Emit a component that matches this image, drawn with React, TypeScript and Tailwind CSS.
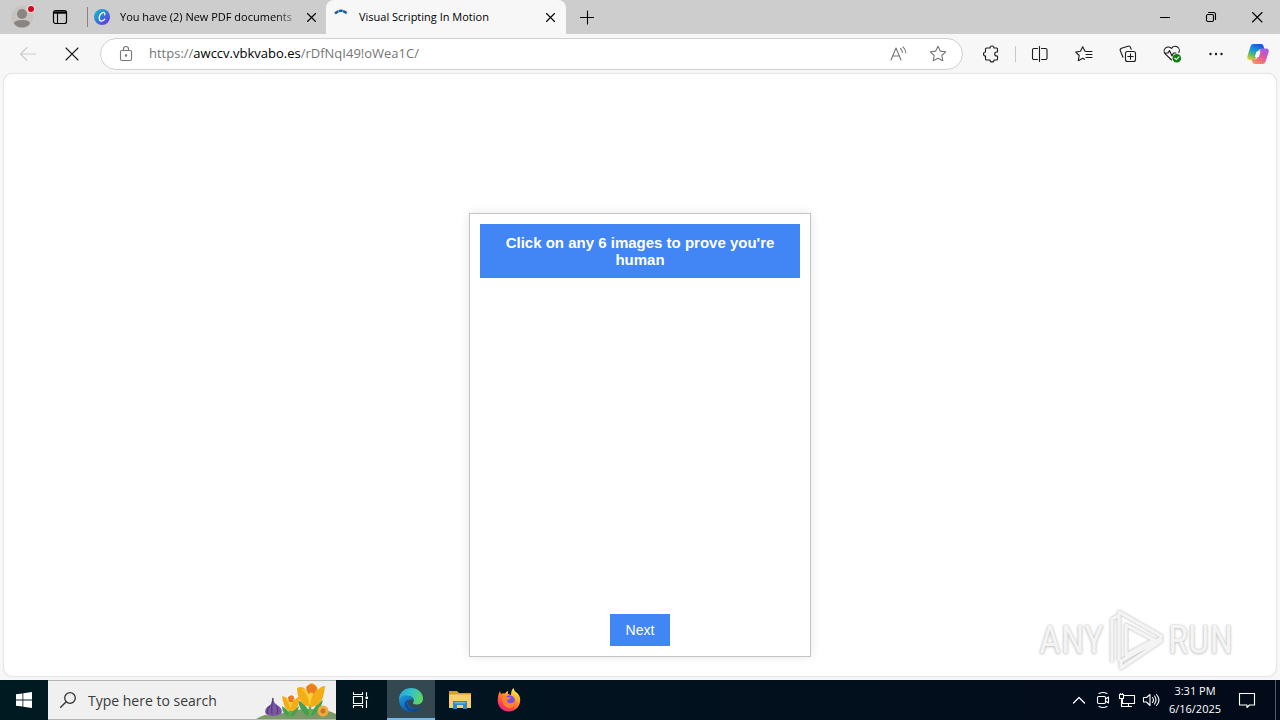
import React from "react";

type IconProps = { children: React.ReactNode; className?: string; box?: number };

function Icon({ children, className = "size-5", box = 20 }: IconProps) {
  return (
    <svg
      viewBox={`0 0 ${box} ${box}`}
      className={`${className} shrink-0`}
      fill="none"
      stroke="currentColor"
      strokeWidth="1.1"
      strokeLinejoin="round"
      strokeLinecap="round"
      aria-hidden="true"
    >
      {children}
    </svg>
  );
}

const STAR = "M10 2.2l2.3 4.9 5.4.7-3.9 3.7 1 5.3-4.8-2.6-4.8 2.6 1-5.3-3.9-3.7 5.4-.7z";

function Cross() {
  return (
    <Icon className="size-4" box={16}>
      <path d="M4.500 4.500l8 8M12.500 4.500l-8 8" />
    </Icon>
  );
}

function TitleBar() {
  return (
    <header className="flex h-[34px] shrink-0 items-stretch bg-[#cdcdcd] text-black">
      <button aria-label="Profile" className="flex w-11 items-center justify-center">
        <svg viewBox="0 0 28 28" className="size-7" aria-hidden="true">
          <circle cx="14" cy="14" r="11" fill="#c6c3c1" />
          <circle cx="14" cy="11" r="5" fill="#8a8583" />
          <path d="M6 20.500q0-3.500 8-3.500t8 3.500q-2.500 4-8 4t-8-4z" fill="#8a8583" />
          <circle cx="23" cy="6" r="4.200" fill="#eed8d8" />
          <circle cx="23" cy="6" r="3" fill="#d5091e" />
        </svg>
      </button>
      <button aria-label="Tab actions" className="flex w-8 items-center justify-center">
        <Icon className="size-4" box={16}>
          <rect x="1.500" y="1.500" width="13" height="13" rx="2" strokeWidth="1.200" />
          <path d="M2 3.500h12" strokeWidth="2.400" strokeLinecap="butt" />
          <path d="M5.500 4v10.500" />
        </Icon>
      </button>
      <nav aria-label="Tabs" className="ml-[11px] flex items-stretch text-[11px]">
        <div className="flex w-[239px] items-center pr-0.5">
          <span className="h-5 w-px bg-[#94807a]" />
          <svg viewBox="0 0 16 16" className="ml-1.5 size-4 shrink-0" aria-hidden="true">
            <defs>
              <linearGradient id="canva" x1="0" y1="0" x2="1" y2="1">
                <stop offset="0.100" stopColor="#12b8ce" />
                <stop offset="0.500" stopColor="#3277dc" />
                <stop offset="1" stopColor="#7c25dd" />
              </linearGradient>
            </defs>
            <circle cx="8" cy="8" r="8" fill="url(#canva)" />
            <path d="M10.700 5.800c.8-1.600-.5-2.700-2-2.200C6.400 4.300 5 7.400 5.200 9.600c.2 3 3.500 3.300 5.600.6" fill="none" stroke="#fff" strokeWidth="1.300" strokeLinecap="round" />
          </svg>
          <a href="#documents" className="ml-2.5 min-w-0 flex-1 bg-linear-to-r from-black from-85% to-[#b5b5b5] bg-clip-text whitespace-nowrap text-transparent">
            You have (2) New PDF documents
          </a>
          <button aria-label="Close tab" className="flex w-[26px] justify-center"><Cross /></button>
        </div>
        <div className="flex w-60 items-center rounded-t-lg bg-[#f7f7f7] pl-[7px] pr-[3px]">
          <Icon className="size-4" box={16}>
            <path d="M2 4.500Q8-1 14 4.500" stroke="#155d9b" strokeWidth="2.400" strokeLinecap="butt" strokeDasharray="4 .4" />
          </Icon>
          <a href="#visual" aria-current="page" className="ml-2.5 min-w-0 flex-1 whitespace-nowrap">Visual Scripting In Motion</a>
          <button aria-label="Close tab" className="flex w-[26px] justify-center"><Cross /></button>
        </div>
      </nav>
      <button aria-label="New tab" className="flex w-[42px] items-center justify-center">
        <Icon className="size-4" box={16}><path d="M1.500 8.500h13M8.500 2v13" /></Icon>
      </button>
      <div className="ml-auto flex">
        <button aria-label="Minimize" className="flex w-[46px] items-center justify-center">
          <Icon className="size-4" box={16}><path d="M3.500 8.500h9" /></Icon>
        </button>
        <button aria-label="Restore" className="flex w-[46px] items-center justify-center">
          <Icon className="size-4" box={16}>
            <rect x="3.500" y="5.500" width="7" height="7" rx="1.500" />
            <path d="M5.500 3.500h5q2 0 2 2v5" />
          </Icon>
        </button>
        <button aria-label="Close" className="flex w-[46px] items-center justify-center">
          <Icon className="size-4" box={16}><path d="M3.500 3.500l9.500 9.500M13 3.500L3.500 13" /></Icon>
        </button>
      </div>
    </header>
  );
}

function ToolButton({ label, children }: { label: string; children: React.ReactNode }) {
  return (
    <button aria-label={label} className="flex h-8 w-11 shrink-0 items-center justify-center">{children}</button>
  );
}

function Toolbar() {
  return (
    <div className="flex h-10 shrink-0 items-center pl-1.5 pr-0.5 text-[#1b1b1b]">
      <button aria-label="Back" className="flex h-8 w-11 items-center justify-center text-[#cccccc]">
        <Icon><path d="M17.500 10h-15M9 3.500L2.500 10 9 16.500" /></Icon>
      </button>
      <ToolButton label="Stop"><Icon><path d="M4 4l12 12M16 4L4 16" /></Icon></ToolButton>
      <div className="mx-1.5 flex h-8 min-w-0 flex-1 items-center rounded-full border border-[#d0d0d0] bg-white pl-[15px] pr-1 text-[#767676]">
        <Icon>
          <rect x="4.500" y="6.500" width="11" height="10" rx="1.500" />
          <path d="M7.500 6.500V5a2.500 2.500 0 0 1 5 0v1.500" />
          <circle cx="10" cy="11.500" r="0.700" fill="currentColor" />
        </Icon>
        <a href="#address" className="ml-[13px] flex-1 whitespace-nowrap text-[13px]">
          https://<span className="text-black">awccv.vbkvabo.es</span>/rDfNqI49!oWea1C/
        </a>
        <button aria-label="Read aloud" className="flex w-10 justify-center">
          <Icon>
            <path d="M3 16L8 4l5 12M4.800 12h6.400M12.500 4.500q1.800 1.500 1.800 4M15 2.800q2.700 2.500 2.700 6" />
          </Icon>
        </button>
        <button aria-label="Add to favorites" className="flex w-10 justify-center"><Icon><path d={STAR} /></Icon></button>
      </div>
      <ToolButton label="Extensions">
        <Icon>
          <path d="M5.500 4H9a2 2 0 0 1 4 0h2.500a1 1 0 0 1 1 1v3h-.800a2 2 0 0 0 0 4h.800v3a1 1 0 0 1-1 1H13a2 2 0 0 1-4 0H5.500a1 1 0 0 1-1-1v-3a2 2 0 0 1 0-4V5a1 1 0 0 1 1-1z" />
        </Icon>
      </ToolButton>
      <span className="mx-0.5 h-4 w-px bg-[#c9c9c9]" />
      <ToolButton label="Split screen">
        <Icon>
          <path d="M7.500 4.500H4A1.500 1.500 0 0 0 2.500 6v8A1.500 1.500 0 0 0 4 15.500h3.500M11.500 4.500h4A1.500 1.500 0 0 1 17 6v8a1.500 1.500 0 0 1-1.500 1.500h-4M9.500 2.500v15" />
        </Icon>
      </ToolButton>
      <ToolButton label="Favorites">
        <Icon>
          <path d="M12.500 7.500L11 7.300 8.700 2.700 6.500 7.300 1.700 8l3.500 3.500-.9 5.200 4.400-2.400 1.800 1M12.500 7.500H18M12 10.500h6M12 13.500h6" />
        </Icon>
      </ToolButton>
      <ToolButton label="Collections">
        <Icon>
          <rect x="7.500" y="7.500" width="10" height="10" rx="2" />
          <path d="M12.500 9.800v5.400M9.800 12.500h5.400M5 13.200L2.300 6.700a2 2 0 0 1 1.200-2.500l6.500-2a2 2 0 0 1 2.500 1.300l.7 1.800" />
        </Icon>
      </ToolButton>
      <ToolButton label="Browser essentials">
        <Icon>
          <path d="M9.500 16L3 9.700A4 4 0 0 1 9.500 4.500 4 4 0 0 1 16.800 8.500M2.500 9H6l1.500-2.500L10 12l1.500-3H14" />
          <circle cx="14.800" cy="14.200" r="4.300" fill="#107c10" stroke="none" />
          <path d="M12.800 14.200l1.500 1.500 2.600-2.800" stroke="#fff" />
        </Icon>
      </ToolButton>
      <ToolButton label="Settings and more">
        <Icon><g fill="currentColor" stroke="none"><circle cx="4.500" cy="10" r="1.200" /><circle cx="10" cy="10" r="1.200" /><circle cx="15.500" cy="10" r="1.200" /></g></Icon>
      </ToolButton>
      <button aria-label="Copilot" className="flex h-8 w-10 shrink-0 items-center justify-center">
        <svg viewBox="0 0 24 24" className="size-6" aria-hidden="true">
          <defs>
            <linearGradient id="cop1" x1="0.700" y1="0" x2="0.200" y2="1">
              <stop offset="0" stopColor="#1456d8" /><stop offset="0.450" stopColor="#169bdc" /><stop offset="0.700" stopColor="#52b96a" /><stop offset="1" stopColor="#f1cf20" />
            </linearGradient>
            <linearGradient id="cop2" x1="0.800" y1="0" x2="0.200" y2="1">
              <stop offset="0" stopColor="#a35be8" /><stop offset="0.500" stopColor="#e4589e" /><stop offset="1" stopColor="#f9964e" />
            </linearGradient>
          </defs>
          <path d="M7.500 2h7.300c2 0 2.500 1.300 3 3l.5 2h-3c-2 0-2.900 1-3.400 2.500l-2 6c-.5 1.700-1.300 2.500-3 2.500H4c-2.500 0-3.200-1.500-2.500-4L4.300 5c.6-2 1.400-3 3.200-3z" fill="url(#cop1)" />
          <path d="M16.500 22H9.200c-2 0-2.500-1.300-3-3l-.4-1.500h2.400c2 0 2.900-1 3.400-2.500l2-6c.5-1.700 1.300-2.500 3-2.500H20c2.500 0 3.200 1.500 2.500 4L19.700 19c-.6 2-1.400 3-3.200 3z" fill="url(#cop2)" />
          <path d="M10.500 9.500h4l-1.700 5.500H8.700z" fill="#fff" />
        </svg>
      </button>
    </div>
  );
}

function Watermark() {
  return (
    <div className="absolute right-[43px] bottom-1 flex items-center gap-1 font-['Liberation_Sans_Narrow','Roboto_Condensed','Liberation_Sans',sans-serif] text-[38px] leading-[64px] text-[#f4f4f4] [text-shadow:0_0_2px_#bdbdbd,0_1px_3px_#cccccc]">
      <span>ANY</span>
      <svg viewBox="0 0 56 64" className="h-16 w-14 drop-shadow-[0_0_1px_#aaaaaa]" fill="none" stroke="#f4f4f4" strokeWidth="3.5" strokeLinejoin="round" aria-hidden="true">
        <path d="M4 54V11l6-3M11 53V4l42 24v5L13 60v-7l39-22M18 47V17l28 15z" />
      </svg>
      <span>RUN</span>
    </div>
  );
}

function Page() {
  return (
    <main className="relative mx-1 mb-1 flex flex-1 flex-col items-center justify-end rounded-lg bg-white px-4 pt-4 pb-[19px] font-['Liberation_Sans',Arial,sans-serif] shadow-[0_0_2px_#b8b8b8]">
      <section className="flex w-full max-w-[342px] flex-col items-center border border-[#c4c4c4] bg-white p-2.5 shadow-[0_0_10px_rgba(0,0,0,0.1)]">
        <h1 className="w-full bg-[#4285f4] p-2.5 text-center text-[15px] leading-[17px] font-bold text-white">
          Click on any 6 images to prove you're human
        </h1>
        <div className="h-[336px] w-full" />
        <button className="h-8 w-[60px] bg-[#4285f4] text-[14px] text-white">Next</button>
      </section>
      <Watermark />
    </main>
  );
}

function Flowers() {
  return (
    <svg viewBox="0 0 80 38" className="h-[38px] w-20 shrink-0" aria-hidden="true">
      <path d="M0 38q9-6 24-5 14-5 30-5 17 0 26 5v5z" fill="#7c9a68" />
      <path d="M34 33q-2-4-8-8 0 8 7 11h3q6-4 7-11-6 4-8 8M54 32q-4-9-12-13 1 10 9 16h5q9-6 11-16-8 4-11 13" fill="#48a04f" />
      <path d="M34 25v11M54 20v15" stroke="#5fae55" strokeWidth="2.500" />
      <path d="M17 16q0 5 4 8 7 4 4 9-8 4-15 0-3-5 4-9 3-3 3-8z" fill="#7a56a3" />
      <path d="M17 17q-2 9-1 16M20 24q3 4 1 9M14 25q-4 4-2 8" fill="none" stroke="#523978" strokeWidth="1.200" />
      <path d="M26 15q5 1 6 4 1-4 4-5 3 2 3 5 2-3 5-4-1 10-4 13-5 4-10 0-3-5-4-13z" fill="#f2ad17" />
      <path d="M30 18q4 5 4 12 1-8 5-12-4-3-9 0z" fill="#ffcc38" />
      <path d="M32 16q3-3 6 0l-1 5h-4z" fill="#e77b26" />
      <path d="M41 7q6-3 9 2 1-6 6-7 5 2 6 7 3-4 7-4-1 13-6 18-8 6-16 0-6-6-6-16z" fill="#f3ad17" />
      <path d="M46 8q6 5 8 17 1-12 7-17-8 0-7 6-2-6-8-6z" fill="#ffd03c" />
      <path d="M50 6q6-6 11 1l-3 6q-3-3-6 0z" fill="#ea7c24" />
      <circle cx="67" cy="30" r="5.500" fill="#f0ab3c" />
      <circle cx="67" cy="30" r="2.500" fill="#cc7424" />
    </svg>
  );
}

function Tray({ label, children }: { label: string; children: React.ReactNode }) {
  return <button aria-label={label} className="flex w-6 items-center justify-center">{children}</button>;
}

function Taskbar() {
  return (
    <footer className="flex h-10 shrink-0 items-stretch bg-linear-to-r from-[#001a22] to-[#030a1a] text-white">
      <button aria-label="Start" className="flex w-12 items-center justify-center">
        <svg viewBox="0 0 16 16" className="size-4" fill="#fff" aria-hidden="true">
          <path d="M0 2.300L6.500 1.400V7.600H0zM7.300 1.300L16 0v7.600H7.300zM0 8.400h6.500v6.200L0 13.700zM7.300 8.400H16V16l-8.700-1.300z" />
        </svg>
      </button>
      <label className="flex w-72 items-center border-y border-[#b5b5b5] bg-[#f0f0f0] pl-3 text-[#333]">
        <Icon className="size-4" box={16}><circle cx="10" cy="6" r="5.300" strokeWidth="1.300" /><path d="M6.200 9.800L.7 15.300" strokeWidth="1.300" /></Icon>
        <input aria-label="Type here to search" placeholder="Type here to search" className="ml-3 min-w-0 flex-1 bg-transparent text-[14px] outline-none placeholder:text-[#3a3a3a]" />
        <Flowers />
      </label>
      <button aria-label="Task view" className="flex w-[51px] items-center justify-center pr-[3px]">
        <Icon className="size-[18px]" box={18}>
          <path d="M2.500 1.500v2h9v-2M2.500 16.500v-2h9v2M2.500 5.500h9v7h-9zM15.500 1.500v3M15.500 9.500v7" strokeLinejoin="miter" />
          <rect x="15" y="6" width="1.500" height="1.500" fill="#fff" />
        </Icon>
      </button>
      <button aria-label="Microsoft Edge" className="flex w-12 items-center justify-center border-b-2 border-[#76b9ed] bg-[#334850] pt-0.5">
        <svg viewBox="0 0 24 24" className="size-6" aria-hidden="true">
          <defs>
            <linearGradient id="edgeTop" x1="0" y1="0.300" x2="1" y2="0.600"><stop offset="0" stopColor="#2aa8df" /><stop offset="0.500" stopColor="#35c4c1" /><stop offset="1" stopColor="#60d65a" /></linearGradient>
            <linearGradient id="edgeLow" x1="0" y1="0" x2="0.600" y2="1"><stop offset="0" stopColor="#1c9de0" /><stop offset="1" stopColor="#0c50a5" /></linearGradient>
          </defs>
          <path d="M0 11C.5 4 5.500 0 12 0c7 0 12 5 12 10.500 0 4-3 6-6.500 6-3 0-4-1-3.500-2 2-2 .5-6-4-6.500C6 7.500 2 8.500 0 12z" fill="url(#edgeTop)" />
          <path d="M0 11.500C2 7.500 6 6.500 9 7.500c3.500.8 5 3 4.800 4.500C10 10.500 8 13 9 16c1.200 3.800 6 5.500 12.500 3.500C19 23 15.500 24 12 24 5 24 0 18.500 0 11.500z" fill="url(#edgeLow)" />
          <path d="M9.500 11.500C7.500 14 8 18 11 20c3 2 7 1.500 11-1.500-1 3-4.500 5-7.500 5.300C8.500 23 5.500 19 6 15.500c.3-2 1.700-3.500 3.500-4z" fill="#12498e" />
        </svg>
      </button>
      <button aria-label="File Explorer" className="flex w-[50px] items-center justify-center">
        <svg viewBox="0 0 22 20" className="h-5 w-[22px]" aria-hidden="true">
          <path d="M0 1h8l2 2h12v4H0z" fill="#e39b25" />
          <path d="M0 4.500h22V18H0z" fill="#f8d069" />
          <path d="M4 19v-8h14v8h-4v-4H8v4z" fill="#3488c6" />
          <path d="M5.500 12h11v1.500h-11z" fill="#6cb4df" />
        </svg>
      </button>
      <button aria-label="Firefox" className="flex w-12 items-center justify-center">
        <svg viewBox="0 0 24 24" className="size-6" aria-hidden="true">
          <defs>
            <linearGradient id="fox" x1="0.800" y1="0" x2="0.200" y2="1"><stop offset="0.050" stopColor="#fff34d" /><stop offset="0.400" stopColor="#ff9a25" /><stop offset="0.750" stopColor="#ff4050" /><stop offset="1" stopColor="#e62086" /></linearGradient>
          </defs>
          <path d="M3 3q0 2 1.500 3Q6 5 8 5.500 9.500 3 11 3v3l3 1q0-5 2.500-7 .5 3 3 4.500Q24 8 23 14c-1 6-6 9.500-11 9.500C5 23.500.7 18.500.7 12.500.7 9 1.500 5.500 3 3z" fill="url(#fox)" />
          <circle cx="12.500" cy="12.500" r="5.300" fill="#7450e8" />
          <path d="M5 9q3-2 5 0l4 .5q-1 2-4 2.500 0 3 3 3.200 3 .2 4.500-2.200 1 6-5 7.200Q5 19 5 9z" fill="#ff822d" />
        </svg>
      </button>
      <div className="ml-auto flex items-stretch">
        <Tray label="Show hidden icons"><Icon className="size-4" box={16}><path d="M2.500 11L8 5.500 13.500 11" strokeWidth="1.300" /></Icon></Tray>
        <Tray label="Meet now">
          <Icon className="size-[18px]" box={18}><rect x="3.500" y="5.500" width="8" height="7" rx="1.200" /><path d="M11.500 8l3-2v6l-3-2M5 2.500q4-2 8 0M5 15.500q4 2 8 0" /></Icon>
        </Tray>
        <Tray label="Network">
          <Icon className="size-[18px]" box={18}><path d="M6.500 4.500h10v8h-12v-4M10.500 12.500v3M7.500 15.500h6M3.500 8.500v7h3M1.500 3.500h4v4h-4zM2.500 3.500v-1M4.500 3.500v-1" /></Icon>
        </Tray>
        <Tray label="Volume">
          <Icon className="size-[18px]" box={18}><path d="M1.500 6.500h3L8 3.500v11l-3.500-3.500h-3zM10.500 6.500q2 2.500 0 5M12.500 5q3 4 0 8M14.500 3.500q5 5.500 0 11" /></Icon>
        </Tray>
        <time className="flex w-16 flex-col items-center justify-center text-[11px] leading-[18px] whitespace-nowrap"><span>3:31 PM</span><span>6/16/2025</span></time>
        <button aria-label="Notifications" className="flex w-10 items-center justify-center">
          <Icon className="size-[18px]" box={18}><path d="M1.500 2.500h15v11.500H11.500L9 16.500V14H1.500z" /></Icon>
        </button>
        <button aria-label="Show desktop" className="ml-2 w-[5px] border-l border-[#515a68]" />
      </div>
    </footer>
  );
}

export default function App() {
  return (
    <div className="flex min-h-screen flex-col bg-[#f7f7f7] font-['Open_Sans','Noto_Sans',sans-serif]">
      <TitleBar />
      <Toolbar />
      <Page />
      <Taskbar />
    </div>
  );
}
